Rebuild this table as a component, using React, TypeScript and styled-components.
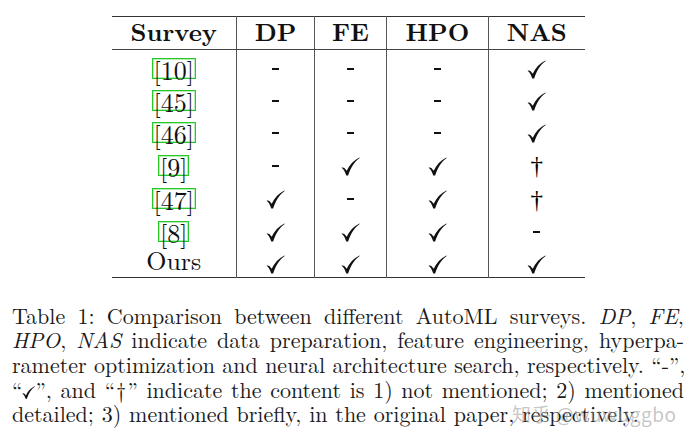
import React from "react";
import styled, { createGlobalStyle } from "styled-components";

const GlobalStyle = createGlobalStyle`
    html, body {
        margin: 0;
        padding: 0;
        background: #ffffff;
    }
`

const serif = `"Latin Modern Roman", "Liberation Serif", serif`

const Page = styled.div`
    position: relative;
    width: 696px;
    height: 445px;
    padding-top: 16px;
    box-sizing: border-box;
    overflow: hidden;
    font-family: ${serif};
    color: #111;
`

const Table = styled.table`
    border-collapse: collapse;
    margin: 0 auto;
    border-top: 1.5px solid #333;
    border-bottom: 1.5px solid #333;
    table-layout: fixed;
    width: 473px;
    font-family: ${serif};
`

const HeadCell = styled.th<{ $w: number }>`
    width: ${p => p.$w}px;
    height: 32px;
    padding: 0 0 5px 0;
    box-sizing: border-box;
    font-family: ${serif};
    font-weight: bold;
    font-size: 25px;
    text-align: center;
    vertical-align: middle;
    line-height: 27px;
    border-bottom: 1.5px solid #444;
    border-left: 1.5px solid #555;
    &:first-child { border-left: none; }
`

const Cell = styled.td`
    height: 32px;
    padding: 0 0 3px 0;
    box-sizing: border-box;
    font-family: ${serif};
    font-size: 26px;
    text-align: center;
    vertical-align: middle;
    line-height: 29px;
    border-left: 1.5px solid #555;
    &:first-child { border-left: none; }
`

const Cite = styled.span`
    display: inline-block;
    height: 19px;
    line-height: 21px;
    padding: 0 1px;
    border: 1.5px solid #28c828;
    box-shadow: inset 0 0 0 1px #b4f0b4;
    vertical-align: middle;
    margin-top: -2px;
`

const Dash = styled.span`
    display: inline-block;
    width: 7px;
    height: 2px;
    background: #111;
    vertical-align: middle;
`

const Dagger = styled.span`
    display: inline-block;
    height: 22px;
    line-height: 24px;
    vertical-align: middle;
    font-family: "Liberation Serif", serif;
    font-size: 25px;
    color: #000;
`

const CheckSvg = styled.svg`
    display: inline-block;
    vertical-align: middle;
`

function Check({ size = 19 }: { size?: number }) {
    return (
        <CheckSvg width={size} height={size} viewBox="0 0 20 20">
            <path
                d="M0.6,11.4 C2.3,10.4 4.1,11.6 6,14.6 C8.8,8.4 13.2,3.4 19.4,0.4 L19.7,1 C14.2,4.8 10.4,10.6 7.5,19.5 L5.5,19.5 C4.3,15.8 2.8,12.9 0.6,11.4 Z"
                fill="#111"
            />
        </CheckSvg>
    )
}

const Caption = styled.div`
    width: 672px;
    margin: 25px 0 0 12px;
    font-family: ${serif};
    font-size: 22px;
    line-height: 24.6px;
    color: #1a1a1a;
`

const Line = styled.div<{ $w?: number }>`
    width: ${p => (p.$w ? `${p.$w}px` : "100%")};
    text-align: justify;
    text-align-last: justify;
    text-justify: inter-word;
    white-space: nowrap;
`

const Watermark = styled.div`
    position: absolute;
    left: 512px;
    top: 400px;
    font-family: "Noto Sans CJK SC", "Noto Sans", sans-serif;
    font-size: 19px;
    color: rgba(150, 150, 150, 0.55);
    letter-spacing: 0.5px;
    pointer-events: none;
`

type Mark = "c" | "d" | "t"

const rows: { name: string; cite: boolean; marks: Mark[] }[] = [
    { name: "10", cite: true, marks: ["d", "d", "d", "c"] },
    { name: "45", cite: true, marks: ["d", "d", "d", "c"] },
    { name: "46", cite: true, marks: ["d", "d", "d", "c"] },
    { name: "9", cite: true, marks: ["d", "c", "c", "t"] },
    { name: "47", cite: true, marks: ["c", "d", "c", "t"] },
    { name: "8", cite: true, marks: ["c", "c", "c", "d"] },
    { name: "Ours", cite: false, marks: ["c", "c", "c", "c"] },
]

function MarkView({ m }: { m: Mark }) {
    if (m === "c") return <Check />
    if (m === "t") return <Dagger>†</Dagger>
    return <Dash />
}

export default function App() {
    return <Page>
        <GlobalStyle />
        <Table>
            <thead>
                <tr>
                    <HeadCell $w={125}>Survey</HeadCell>
                    <HeadCell $w={78}>DP</HeadCell>
                    <HeadCell $w={72}>FE</HeadCell>
                    <HeadCell $w={102}>HPO</HeadCell>
                    <HeadCell $w={96}>NAS</HeadCell>
                </tr>
            </thead>
            <tbody>
                {rows.map((r, i) => (
                    <tr key={i}>
                        <Cell>{r.cite ? <Cite>[{r.name}]</Cite> : r.name}</Cell>
                        {r.marks.map((m, j) => <Cell key={j}><MarkView m={m} /></Cell>)}
                    </tr>
                ))}
            </tbody>
        </Table>
        <Caption>
            <Line>Table 1: Comparison between different AutoML surveys. <i>DP</i>, <i>FE</i>,</Line>
            <Line><i>HPO</i>, <i>NAS</i> indicate data preparation, feature engineering, hyperpa-</Line>
            <Line>rameter optimization and neural architecture search, respectively. “-”,</Line>
            <Line>“<Check size={13} />”, and “†” indicate the content is 1) not mentioned; 2) mentioned</Line>
            <Line $w={627}>detailed; 3) mentioned briefly, in the original paper, respectively.</Line>
        </Caption>
        <Watermark>知乎 @wuwuggbo</Watermark>
    </Page>
}
